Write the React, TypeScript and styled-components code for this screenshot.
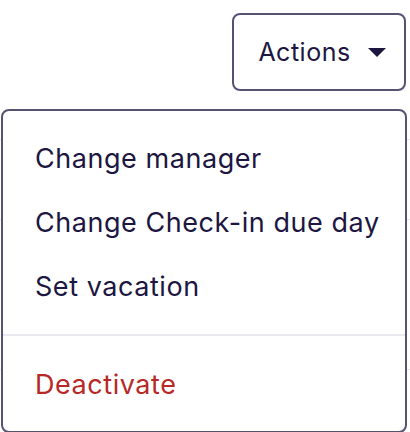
import React from "react";
import styled, { createGlobalStyle } from "styled-components";

const GlobalStyle = createGlobalStyle`
  body {
    margin: 0;
    background: #ffffff;
    font-family: Inter, "Noto Sans", sans-serif;
  }
`;

const Page = styled.div`
  position: relative;
  width: 410px;
  height: 432px;
  overflow: hidden;
  background: #ffffff;
`;

const Toolbar = styled.div`
  display: flex;
  justify-content: flex-end;
  padding: 13px 4px 0 0;
`;

const ActionsButton = styled.button`
  display: flex;
  align-items: center;
  justify-content: center;
  gap: 17px;
  width: 174px;
  height: 78px;
  box-sizing: border-box;
  border: 2px solid #57526f;
  border-radius: 8px;
  background: #ffffff;
  color: #1c1641;
  font-family: inherit;
  font-size: 25px;
  letter-spacing: 0.5px;
  padding: 0 0 0 6px;
`;

const Caret = styled.span`
  width: 0;
  height: 0;
  border-left: 9px solid transparent;
  border-right: 9px solid transparent;
  border-top: 9px solid #1c1641;
`;

// table rows sitting behind the open menu
const RowLines = styled.div`
  display: flex;
  flex-direction: column;
`;

const RowLine = styled.div<{ $gap: number }>`
  height: ${(p) => p.$gap}px;
  border-bottom: 1px solid #e6e6ec;
`;

const Menu = styled.div`
  position: absolute;
  top: 109px;
  left: 1px;
  width: 406px;
  box-sizing: border-box;
  border: 2px solid #57526f;
  border-radius: 8px;
  background: #ffffff;
  padding: 15px 0 15px;
  display: flex;
  flex-direction: column;
`;

const MenuItem = styled.div<{ $danger?: boolean }>`
  height: 64px;
  display: flex;
  align-items: center;
  padding-left: 32px;
  font-size: 27px;
  letter-spacing: 0.55px;
  color: ${(p) => (p.$danger ? "#b72828" : "#1c1641")};
`;

const Divider = styled.div`
  height: 2px;
  background: #e8e8ee;
  margin: 16px 0;
`;

const items = ["Change manager", "Change Check-in due day", "Set vacation"];

export default function App() {
  return (
    <Page>
      <GlobalStyle />
      <Toolbar>
        <ActionsButton>
          Actions
          <Caret />
        </ActionsButton>
      </Toolbar>
      <RowLines>
        <RowLine $gap={48} />
        <RowLine $gap={79} />
        <RowLine $gap={149} />
      </RowLines>
      <Menu>
        {items.map((label) => (
          <MenuItem key={label}>{label}</MenuItem>
        ))}
        <Divider />
        <MenuItem $danger>Deactivate</MenuItem>
      </Menu>
    </Page>
  );
}
